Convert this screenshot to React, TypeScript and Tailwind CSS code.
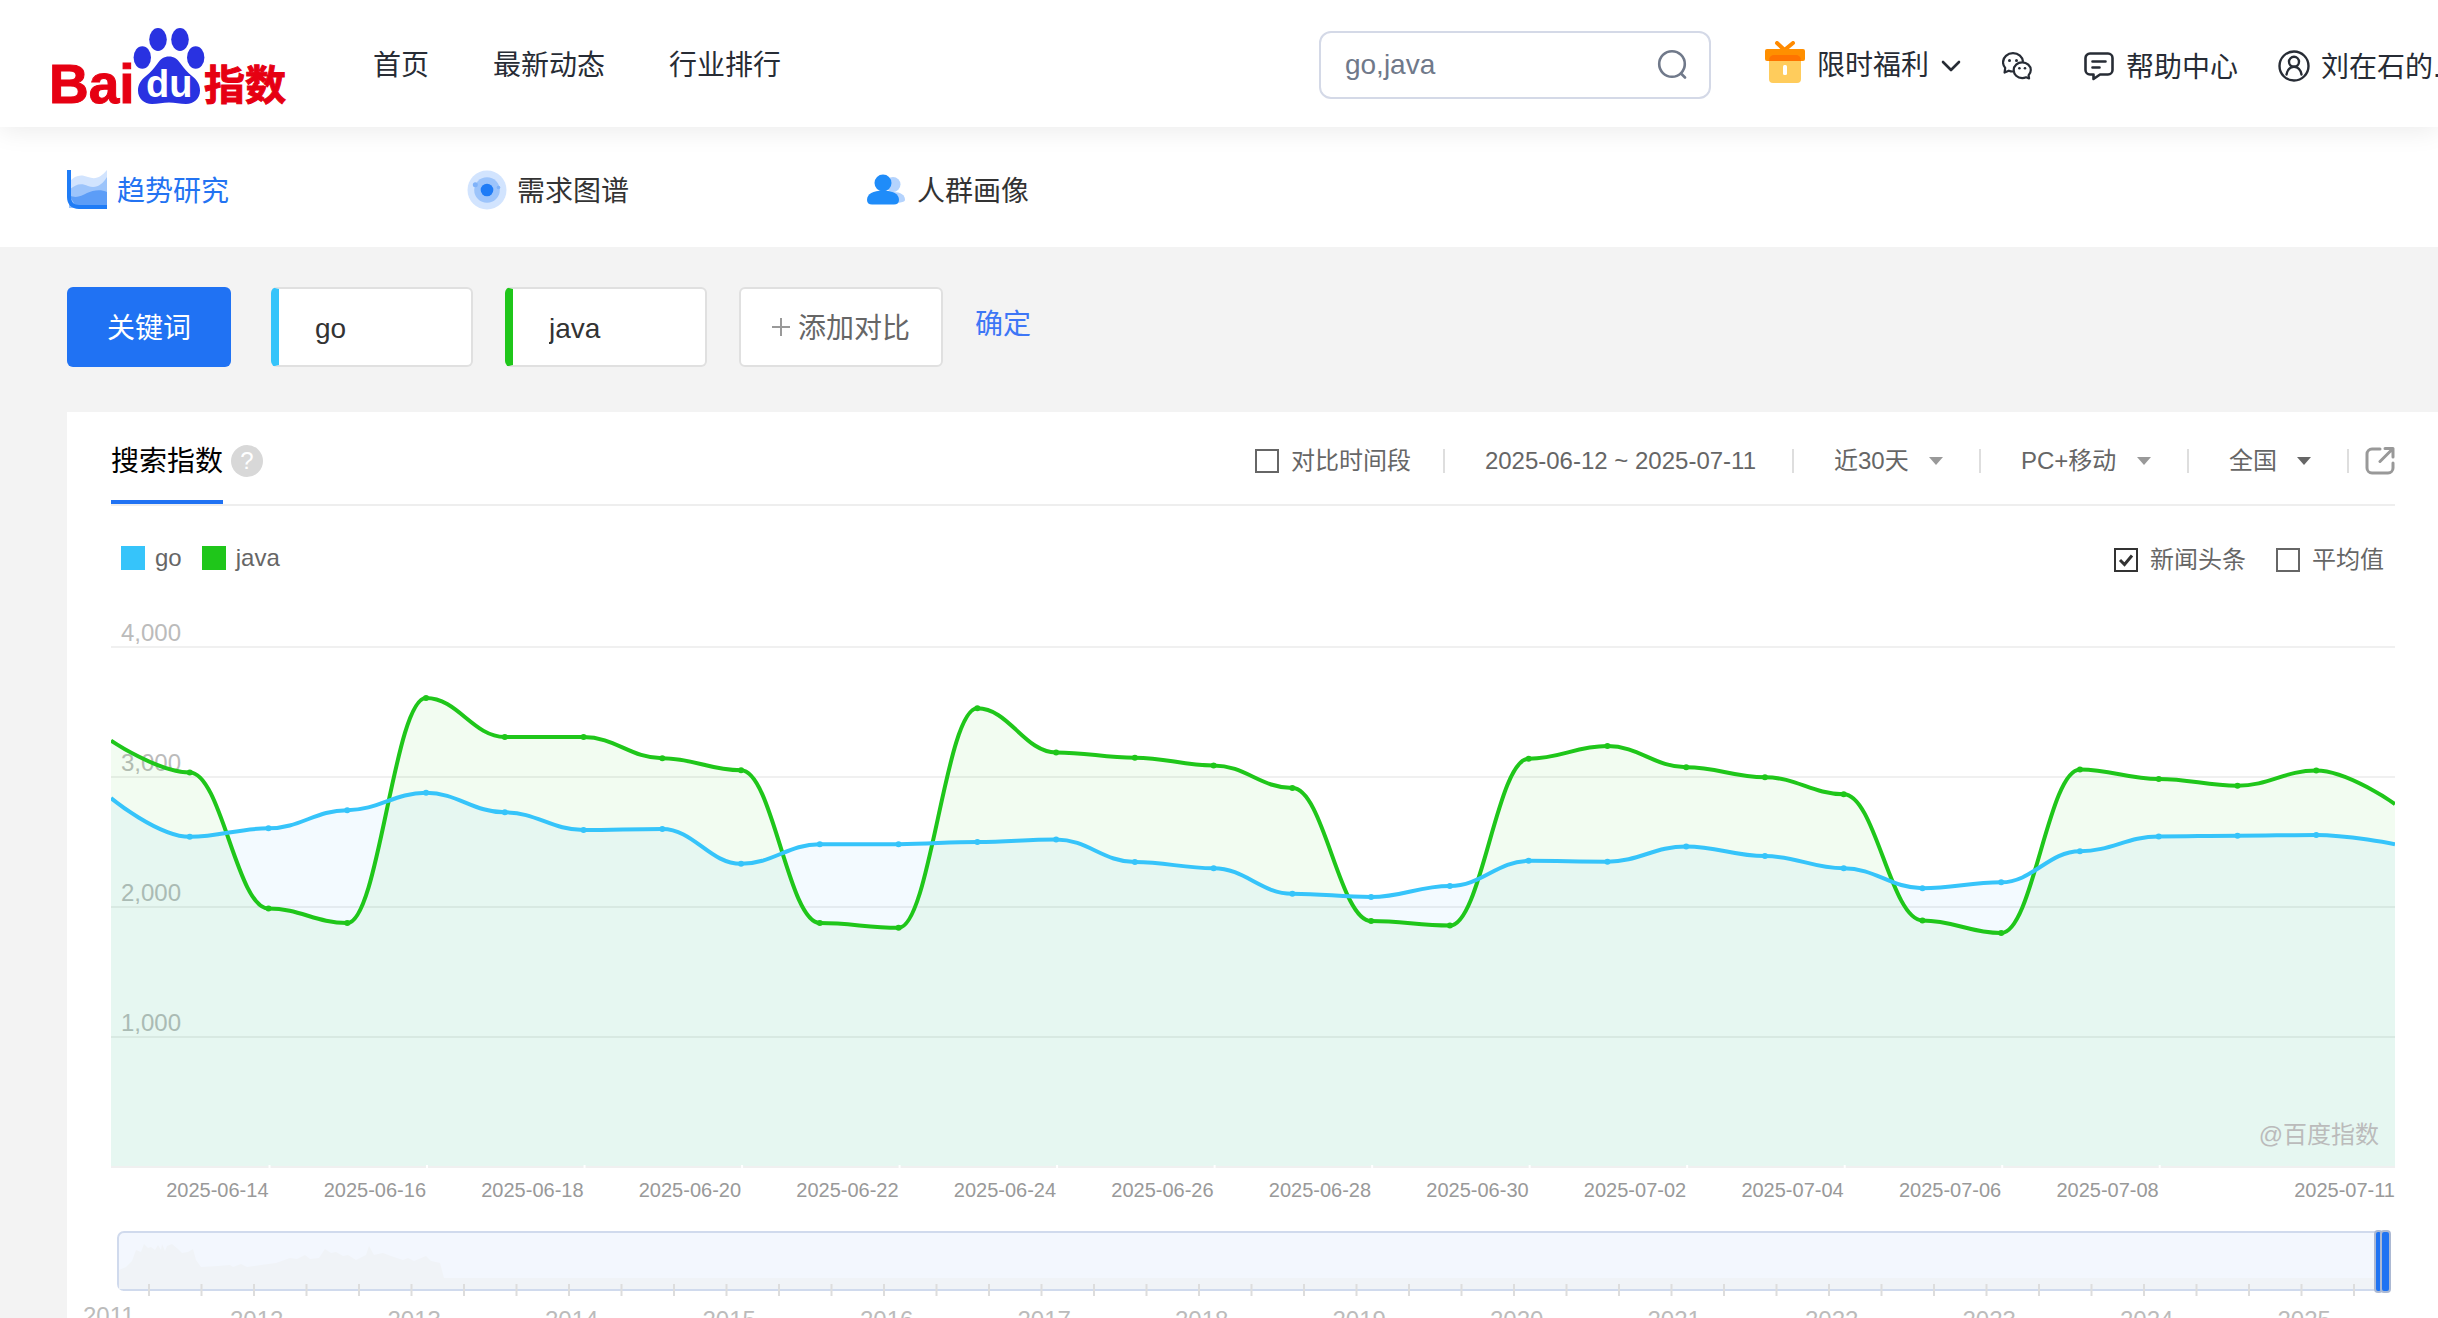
import { useState } from "react";
import type { ReactNode } from "react";

interface Series {
    name: string;
    color: string;
    fill: string;
    values: number[];
}

const SERIES: Series[] = [
    {
        name: "go",
        color: "#36c4fa",
        fill: "rgba(54,176,255,0.06)",
        values: [
            2838, 2540, 2605, 2745, 2879, 2728, 2592, 2600, 2332, 2483, 2483, 2500, 2520, 2346, 2298,
            2102, 2077, 2162, 2355, 2349, 2466, 2392, 2298, 2145, 2190, 2429, 2543, 2548, 2554, 2483,
        ],
    },
    {
        name: "java",
        color: "#1fc61a",
        fill: "rgba(31,198,10,0.06)",
        values: [
            3280, 3035, 1988, 1877, 3608, 3308, 3308, 3144, 3052, 1877, 1840, 3528, 3189, 3149, 3089,
            2915, 1892, 1857, 3141, 3238, 3075, 2998, 2868, 1897, 1800, 3058, 2985, 2933, 3050, 2791,
        ],
    },
];

const DATE_LABELS = [
    "2025-06-14", "2025-06-16", "2025-06-18", "2025-06-20", "2025-06-22", "2025-06-24", "2025-06-26",
    "2025-06-28", "2025-06-30", "2025-07-02", "2025-07-04", "2025-07-06", "2025-07-08",
];

const YEARS = ["2012", "2013", "2014", "2015", "2016", "2017", "2018", "2019", "2020", "2021", "2022", "2023", "2024", "2025"];

const PLOT_WIDTH = 2284;
const PLOT_BOTTOM = 547;
const STEP = PLOT_WIDTH / 29;
const FONT = '"Liberation Sans", "Noto Sans CJK SC", sans-serif';

const px = (i: number) => i * STEP;
const py = (v: number) => PLOT_BOTTOM - v * 0.13;

// smooth curve with horizontal tangents at every inner point
const linePath = (values: number[]) => {
    const last = values.length - 1;
    const reach = STEP * 0.4;
    let d = `M0 ${py(values[0])}`;
    for (let i = 1; i <= last; i++) {
        const x1 = i === 1 ? px(0) : px(i - 1) + reach;
        const x2 = i === last ? px(last) : px(i) - reach;
        d += ` C${x1} ${py(values[i - 1])} ${x2} ${py(values[i])} ${px(i)} ${py(values[i])}`;
    }
    return d;
};

const Logo = () => (
    <svg className="overflow-visible" width="236" height="80" viewBox="0 0 236 80" role="img" aria-label="Baidu 指数">
        <g fill="#2932e1">
            <ellipse cx="105" cy="15.5" rx="8.8" ry="11.4" />
            <ellipse cx="127" cy="15.5" rx="8.8" ry="11.4" />
            <ellipse cx="89.3" cy="33.5" rx="8.7" ry="11.2" />
            <ellipse cx="142.7" cy="33.5" rx="8.7" ry="11.2" />
            <path d="M116 32.500c5 0 8.500 2.500 11.500 7 3.500 5 7 9 11.500 12.500 5 4 8 8.500 8 14.500 0 8-6 13.500-14 13.500-6 0-11-1.500-17-1.500s-11 1.500-17 1.500c-8 0-14-5.500-14-13.500 0-6 3-10.500 8-14.500 4.500-3.500 8-7.500 11.500-12.500 3-4.500 6.500-7 11.500-7z" />
        </g>
        <text x="-4" y="79" fontFamily='"Liberation Sans", sans-serif' fontWeight="700" fontSize="55" fill="#e60012" stroke="#e60012" strokeWidth="1">Bai</text>
        <text x="93" y="73" fontFamily='"Liberation Sans", sans-serif' fontWeight="700" fontSize="38" fill="#fff">du</text>
        <text x="151" y="76" fontFamily='"Noto Sans CJK SC", sans-serif' fontWeight="700" fontSize="41" fill="#e60012" stroke="#e60012" strokeWidth="1">指数</text>
    </svg>
);

const GiftIcon = () => (
    <svg className="mb-2" width="40" height="42" viewBox="0 0 40 42" aria-hidden="true">
        <path d="M12 2l7.500 7L28 2" fill="none" stroke="#ff8a00" strokeWidth="4" strokeLinecap="round" />
        <rect y="8" width="40" height="12" rx="2" fill="#ff8f00" />
        <path d="M4 18h32v20a4 4 0 0 1-4 4H8a4 4 0 0 1-4-4z" fill="#ffcc5c" />
        <path d="M4 20v-1a5 5 0 0 1 5-5h22a5 5 0 0 1 5 5v1z" fill="#ff7300" />
        <rect x="18" y="24" width="4" height="10" rx="1.500" fill="#fff" />
    </svg>
);

const WechatIcon = () => (
    <svg width="30" height="28" viewBox="0 0 30 28" fill="none" stroke="#272c35" strokeWidth="2.200" strokeLinejoin="round" aria-hidden="true">
        <path d="M11 19.500c-1.600 0-3-.3-4.200-.8L2.600 20.500l.6-4.600A10 9.500 0 0 1 1 10.500C1 5.300 5.500 1.200 11 1.200s9.600 3.800 10.100 8.600" />
        <path d="M20.200 10.400c4.800 0 8.600 3.400 8.600 7.700 0 2.200-.9 3.900-2.200 5.200l.5 3.200-3-1.200c-1.200.5-2.500.8-3.900.8-4.800 0-8.500-3.600-8.500-8s3.700-7.700 8.500-7.700z" />
        <g fill="#272c35" stroke="none">
            <circle cx="7.500" cy="8.500" r="1.500" />
            <circle cx="14.500" cy="8.500" r="1.500" />
            <circle cx="17.400" cy="16.200" r="1.300" />
            <circle cx="23" cy="16.200" r="1.300" />
        </g>
    </svg>
);

const HelpIcon = () => (
    <svg width="30" height="30" viewBox="0 0 30 30" fill="none" stroke="#272c35" strokeWidth="2.600" strokeLinecap="round" strokeLinejoin="round" aria-hidden="true">
        <path d="M6 2.500h18a4.500 4.500 0 0 1 4.500 4.500v12a4.500 4.500 0 0 1-4.500 4.500h-8L9.500 28v-4.500H6A4.500 4.500 0 0 1 1.500 19V7A4.500 4.500 0 0 1 6 2.500z" />
        <path d="M8.500 10.500h13M8.500 16.500h7" />
    </svg>
);

const UserIcon = () => (
    <svg width="32" height="32" viewBox="0 0 32 32" fill="none" stroke="#272c35" strokeWidth="2.400" strokeLinecap="round" aria-hidden="true">
        <circle cx="16" cy="16" r="14.500" />
        <circle cx="16" cy="11.800" r="5" />
        <path d="M8.500 24.500c.8-4.600 3.800-7.700 7.500-7.700s6.700 3.100 7.500 7.700" />
    </svg>
);

const TrendIcon = () => (
    <svg width="40" height="40" viewBox="0 0 40 40" aria-hidden="true">
        <path d="M2 12C8 5 14 4 21 7c8 3 13 0 19-7v38H2z" fill="#d2e4fe" />
        <path d="M2 20c7-6 12-7 19-4 8 3 14-1 19-9v31H2z" fill="#9cc4fb" />
        <path d="M2 25c7 4 12 1 18-2s14-4 20-1v16H10z" fill="#5c9df7" />
        <path d="M0 0h4v27c0 5 3 8 8 8h28v4H12C4 39 0 34 0 27z" fill="#1f7cf6" />
    </svg>
);

const DemandIcon = () => (
    <svg width="40" height="40" viewBox="0 0 40 40" aria-hidden="true">
        <circle cx="20" cy="20" r="19.500" fill="#d2e4fe" />
        <circle cx="20" cy="20" r="12.800" fill="#9cc4fb" />
        <circle cx="20" cy="20" r="6.300" fill="#1f7cf6" />
        <circle cx="8.300" cy="14.800" r="2.500" fill="#7fb2f9" />
        <circle cx="31.500" cy="17.500" r="1.800" fill="#7fb2f9" />
    </svg>
);

const CrowdIcon = () => (
    <svg width="40" height="40" viewBox="0 0 40 40" aria-hidden="true">
        <circle cx="26" cy="14.500" r="7.500" fill="#b4d3fd" />
        <path d="M21 33c7 0 17 0 17-3 0-5-4-8-12-8z" fill="#b4d3fd" />
        <circle cx="16" cy="13" r="8.500" fill="#1f8cf9" />
        <path d="M0 30c0-6 6-9.500 16-9.500S32 24 32 30c0 3-2 4.500-5 4.500H5c-3 0-5-1.500-5-4.500z" fill="#1f8cf9" />
    </svg>
);

const Divider = () => <span className="h-6 w-0.5 shrink-0 bg-[#dedede]" />;

const PlainSelect = ({ label, value, arrow }: { label: string; value: string; arrow: string }) => (
    <label className="flex items-center gap-5">
        <select aria-label={label} className="appearance-none bg-transparent text-2xl text-[#666]">
            <option>{value}</option>
        </select>
        <svg width="14" height="8" viewBox="0 0 14 8" aria-hidden="true">
            <path d="M0 0h14L7 8z" fill={arrow} />
        </svg>
    </label>
);

const CheckField = ({ label, initial = false }: { label: string; initial?: boolean }) => {
    const [checked, setChecked] = useState(initial);
    return (
        <label className="flex items-center gap-3 text-2xl text-[#666]">
            <span className="grid">
                <input
                    type="checkbox"
                    checked={checked}
                    onChange={() => setChecked(!checked)}
                    className="col-start-1 row-start-1 size-6 appearance-none border-2 border-[#666] bg-white checked:border-[#333]"
                />
                {checked && (
                    <svg className="pointer-events-none col-start-1 row-start-1 size-6" viewBox="0 0 24 24" aria-hidden="true">
                        <path d="M6 12l4.500 4.500L18 7.500" fill="none" stroke="#333" strokeWidth="3" />
                    </svg>
                )}
            </span>
            {label}
        </label>
    );
};

const SubNavItem = ({ icon, label, active = false }: { icon: ReactNode; label: string; active?: boolean }) => (
    <a href="#" className={`flex w-[400px] items-center gap-2.5 ${active ? "text-[#2373f2]" : "text-[#333]"}`}>
        {icon}
        <span className="pt-1">{label}</span>
    </a>
);

const TrendChart = () => (
    <svg className="block h-auto w-full overflow-visible" viewBox="0 0 2284 590" fontFamily={FONT} role="img" aria-label="搜索指数">
        <clipPath id="plot">
            <rect x="0" y="0" width={PLOT_WIDTH} height="548" />
        </clipPath>
        {[1000, 2000, 3000, 4000].map((v) => (
            <g key={v}>
                <rect x="0" y={py(v) - 1} width={PLOT_WIDTH} height="2" fill="#f0f0f0" />
                <text x="10" y={py(v) - 6} fontSize="24" fill="#bbb">{v.toLocaleString("en-US")}</text>
            </g>
        ))}
        <rect x="0" y="546" width={PLOT_WIDTH} height="2" fill="#f0f0f0" />
        <g clipPath="url(#plot)">
            {SERIES.map((s) => (
                <path key={s.name} d={`${linePath(s.values)} V546 H0 Z`} fill={s.fill} />
            ))}
            {[...SERIES].reverse().map((s) => (
                <g key={s.name}>
                    <path d={linePath(s.values)} fill="none" stroke={s.color} strokeWidth="4" />
                    {s.values.slice(1, -1).map((v, i) => (
                        <circle key={i} cx={px(i + 1)} cy={py(v)} r="3" fill={s.color} />
                    ))}
                </g>
            ))}
        </g>
        {DATE_LABELS.map((label, i) => (
            <g key={label}>
                <rect x={px(i * 2 + 2)} y="545" width="2" height="3" fill="#fff" />
                <text x={px(i * 2 + 2)} y="577" fontSize="20" textAnchor="end" fill="#999">{label}</text>
            </g>
        ))}
        <text x={PLOT_WIDTH} y="577" fontSize="20" textAnchor="end" fill="#999">2025-07-11</text>
        <text x="2268" y="523" fontSize="24" textAnchor="end" fill="#bbb">@百度指数</text>
    </svg>
);

const RangeSlider = () => (
    <svg className="mt-5 block h-auto w-full overflow-visible" viewBox="0 0 2284 110" fontFamily={FONT} role="img" aria-label="2011 - 2025">
        <rect x="7" y="2" width="2268" height="58" rx="6" fill="#f3f7fe" stroke="#d0daed" strokeWidth="2" />
        <path
            fill="#f0f3f7"
            d="M8 40l7-3 6-6 4-11 5 2 3-8 4 4 3-1 4 3 3-5 3 5 1-6 3 7 2-5 5-2 6 5 4 4 6-1 5-3 3 11 5 7 17-1 12-1 3 2 8-3 6 3 14-2 15-2 14-5 7 1 8-4 5 4 9-1 6-9 6 4 5-1 7 4 5-1 8 5 10-5 3-9 5 9 9-2 8 3 12 4 5-2 6 3 12-5 5 5 9 2 4 15H2268V59H8z"
        />
        <path d="M12 60H2270" stroke="#d0daed" strokeWidth="2" />
        {Array.from({ length: 43 }, (_, i) => (
            <rect key={i} x={37 + i * 52.5} y="54" width="2" height="12" fill="#ddd" />
        ))}
        <g fill="#1f73f2" stroke="#acb9d3" strokeWidth="2">
            <rect x="2264" y="1" width="7" height="61" rx="3" />
            <rect x="2270" y="1" width="9" height="61" rx="3" />
        </g>
        <text x="-28" y="94" fontSize="24" fill="#bbb">2011</text>
        {YEARS.map((year, i) => (
            <text key={year} x={119 + i * 157.5} y="98" fontSize="24" fill="#bbb">{year}</text>
        ))}
    </svg>
);

const Header = () => (
    <header className="relative flex h-[127px] items-center bg-white pl-[53px] whitespace-nowrap text-[#272c35] shadow-[0_4px_24px_rgba(0,0,0,0.08)]">
        <a href="#" className="shrink-0">
            <Logo />
        </a>
        <nav className="mt-1 ml-[84px] flex gap-16">
            <a href="#">首页</a>
            <a href="#">最新动态</a>
            <a href="#">行业排行</a>
        </nav>
        <form className="mt-0.5 ml-auto flex h-[68px] w-[392px] items-center rounded-xl border-2 border-[#d4d9e7] pr-[22px] pl-6">
            <input aria-label="搜索" defaultValue="go,java" className="w-full min-w-0 flex-1 text-[#70798a] outline-none" />
            <button type="submit" aria-label="搜索" className="pb-0.5">
                <svg className="block" width="30" height="30" viewBox="0 0 30 30" fill="none" stroke="#70798a" strokeWidth="2.600" strokeLinecap="round" aria-hidden="true">
                    <circle cx="15" cy="15" r="12.800" />
                    <path d="M24 24.500l4 4" />
                </svg>
            </button>
        </form>
        <button type="button" className="mt-1 ml-[54px] flex items-center gap-3">
            <GiftIcon />
            限时福利
            <svg width="20" height="12" viewBox="0 0 20 12" fill="none" stroke="#272c35" strokeWidth="2.600" strokeLinecap="round" strokeLinejoin="round" aria-hidden="true">
                <path d="M2 2l8 8 8-8" />
            </svg>
        </button>
        <a href="#" aria-label="微信" className="mt-1 ml-[41px]">
            <WechatIcon />
        </a>
        <a href="#" className="mt-1 ml-[52px] flex items-center gap-3">
            <HelpIcon />
            <span className="pt-1">帮助中心</span>
        </a>
        <a href="#" className="mt-1 ml-10 flex items-center gap-[11px]">
            <UserIcon />
            <span className="w-[117px] overflow-hidden pt-1">刘在石的...</span>
        </a>
    </header>
);

const KeywordBox = ({ word, accent }: { word: string; accent: string }) => (
    <input
        aria-label={word}
        defaultValue={word}
        className={`h-20 w-[202px] rounded-md border-2 border-l-8 border-[#e0e0e0] bg-white pt-1 pl-9 text-[#333] outline-none ${accent}`}
    />
);

const App = () => {
    return (
        <div className="min-h-screen overflow-hidden bg-[#f3f3f3] font-['Liberation_Sans','Noto_Sans_CJK_SC',sans-serif] text-[28px] leading-10">
            <Header />
            <nav className="flex h-[120px] items-center bg-white pt-1.5 pr-10 pl-[67px]">
                <SubNavItem icon={<TrendIcon />} label="趋势研究" active />
                <SubNavItem icon={<DemandIcon />} label="需求图谱" />
                <SubNavItem icon={<CrowdIcon />} label="人群画像" />
            </nav>

            <main className="pl-[67px]">
                {/* Keywords */}
                <section className="flex items-center gap-8 py-10">
                    <button type="button" className="mr-2 h-20 w-[164px] rounded-md bg-[#2072f3] pt-1 text-white">关键词</button>
                    <KeywordBox word="go" accent="border-l-[#36c4fa]" />
                    <KeywordBox word="java" accent="border-l-[#1fc61a]" />
                    <button type="button" className="flex h-20 w-[204px] items-center justify-center gap-2 rounded-md border-2 border-[#e0e0e0] bg-white text-[#666]">
                        <svg width="18" height="18" viewBox="0 0 18 18" aria-hidden="true">
                            <path d="M9 0v18M0 9h18" stroke="#999" strokeWidth="2" />
                        </svg>
                        <span className="pt-1">添加对比</span>
                    </button>
                    <button type="button" className="pb-1 text-[#3d76f6]">确定</button>
                </section>

                {/* Search index card */}
                <section className="mt-[5px] bg-white pr-[43px] pb-10 pl-11">
                    <div className="flex h-[94px] items-stretch justify-between border-b-2 border-[#eee]">
                        <div className="flex gap-2">
                            <h2 className="flex items-center border-b-4 border-[#2072f3] pt-3 text-black">搜索指数</h2>
                            <button type="button" aria-label="说明" className="mt-[33px] size-8 rounded-full bg-[#d8d8d8] text-2xl leading-8 text-white">?</button>
                        </div>
                        <div className="flex items-center pt-1.5 text-2xl text-[#666]">
                            <div className="mr-8">
                                <CheckField label="对比时间段" />
                            </div>
                            <Divider />
                            <button type="button" className="mr-9 ml-10">2025-06-12 ~ 2025-07-11</button>
                            <Divider />
                            <div className="mr-9 ml-10">
                                <PlainSelect label="时间" value="近30天" arrow="#999" />
                            </div>
                            <Divider />
                            <div className="mr-9 ml-10">
                                <PlainSelect label="设备" value="PC+移动" arrow="#999" />
                            </div>
                            <Divider />
                            <div className="mr-9 ml-10">
                                <PlainSelect label="地区" value="全国" arrow="#666" />
                            </div>
                            <Divider />
                            <button type="button" aria-label="导出" className="ml-4">
                                <svg width="30" height="28" viewBox="0 0 30 28" fill="none" stroke="#999" strokeWidth="3" strokeLinecap="round" strokeLinejoin="round" aria-hidden="true">
                                    <path d="M15 2H7a5 5 0 0 0-5 5v14a5 5 0 0 0 5 5h16a5 5 0 0 0 5-5v-5" />
                                    <path d="M20 1.500h8V10M27.500 2L15 14.500" />
                                </svg>
                            </button>
                        </div>
                    </div>

                    <div className="flex h-[114px] items-center justify-between pr-[11px] pb-1.5 pl-2.5">
                        <div className="flex gap-5 pb-1 text-2xl text-[#666]">
                            <span className="flex items-center gap-2.5">
                                <i className="size-6 bg-[#36c4fa]" />
                                go
                            </span>
                            <span className="flex items-center gap-2.5">
                                <i className="size-6 bg-[#1fc61a]" />
                                java
                            </span>
                        </div>
                        <div className="flex gap-[30px]">
                            <CheckField label="新闻头条" initial />
                            <CheckField label="平均值" />
                        </div>
                    </div>

                    <TrendChart />
                    <RangeSlider />
                </section>
            </main>
        </div>
    );
};

export default App;
